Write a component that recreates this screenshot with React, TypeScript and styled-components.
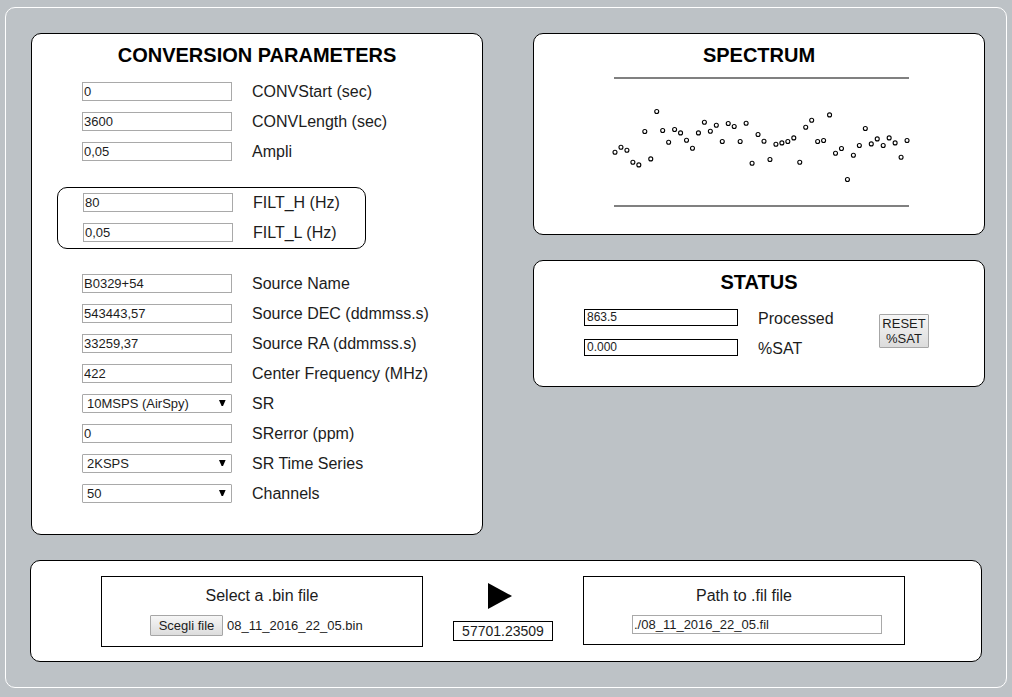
import React, { useRef, useState } from "react";
import styled, { createGlobalStyle } from "styled-components";

const GlobalStyle = createGlobalStyle`
  *, *::before, *::after { box-sizing: border-box; }
  body {
    margin: 0;
    background: #bdc2c6;
    color: #1c1c1c;
    font: 16px/20px "Liberation Sans", Arial, sans-serif;
  }
  input, select, button { font-family: inherit; color: inherit; }
`;

const Frame = styled.main`
  margin: 7px 5px 9px;
  padding: 25px 0;
  border: 1px solid #fff;
  border-radius: 10px;
`;

const Columns = styled.div`
  display: grid;
  grid-template-columns: 1fr 1fr;
  gap: 50px;
  padding: 0 21px 0 25px;
`;

const Stack = styled.div`
  display: flex;
  flex-direction: column;
  gap: 25px;
`;

const Panel = styled.section<{ $bottom: number }>`
  padding: 9px 0 ${(p) => p.$bottom}px;
  background: #fff;
  border: 1px solid #000;
  border-radius: 10px;
`;

const Title = styled.h2`
  margin: 0 0 10px;
  font-size: 20px;
  line-height: 24px;
  text-align: center;
  color: #000;
`;

const Group = styled.div`
  padding-left: 50px;
`;

const FilterGroup = styled.div`
  width: 309px;
  max-width: 100%;
  margin: 20px 0 20px 25px;
  padding-left: 25px;
  border: 1px solid #000;
  border-radius: 10px;
`;

const Row = styled.div`
  display: flex;
  align-items: flex-start;
  gap: 20px;
  height: 30px;
  padding-top: 5px;
`;

const TextInput = styled.input<{ $width: number }>`
  display: block;
  width: ${(p) => p.$width}px;
  height: 19px;
  padding: 0 1px;
  border: 1px solid #a9a9a9;
  border-radius: 0;
  background: #fff;
  font-size: 13px;
`;

const SelectBox = styled.span`
  position: relative;
  display: block;
  width: 150px;
  height: 19px;
`;

const Select = styled.select`
  display: block;
  width: 100%;
  height: 100%;
  padding: 0 20px 0 4px;
  appearance: none;
  border: 1px solid #a9a9a9;
  border-radius: 1px;
  background: #fff;
  font-size: 13px;
`;

const Arrow = styled.svg`
  position: absolute;
  top: 6px;
  right: 6px;
  pointer-events: none;
`;

const Plot = styled.svg`
  display: block;
  margin: 0 auto;
  overflow: visible;
`;

const StatusBody = styled.div`
  display: flex;
  justify-content: space-between;
  align-items: flex-start;
  padding: 0 55px 0 50px;
`;

const ResetArea = styled.div`
  padding-top: 10px;
`;

const Reading = styled.output`
  width: 154px;
  height: 17px;
  padding: 0 2px;
  border: 1px solid #000;
  font-size: 12px;
  line-height: 15px;
`;

const PushButton = styled.button<{ $width: number; $pad: number }>`
  display: block;
  width: ${(p) => p.$width}px;
  padding: ${(p) => p.$pad}px 0;
  border: 1px solid #a6a6a6;
  border-radius: 1px;
  background: linear-gradient(#f6f6f6, #dcdcdc);
  font-size: 13px;
  line-height: 15px;
  white-space: nowrap;
`;

const FilePanel = styled.section`
  display: grid;
  grid-template-columns: 1fr 100px 1fr;
  align-items: start;
  gap: 30px;
  margin: 25px 24px 0;
  padding: 15px 76px 14px 70px;
  background: #fff;
  border: 1px solid #000;
  border-radius: 10px;
`;

const FileBox = styled.div`
  display: flex;
  flex-direction: column;
  align-items: center;
  gap: 9px;
  padding: 9px 0 10px;
  border: 1px solid #000;
`;

const FilePicker = styled.div`
  display: flex;
  align-items: center;
  gap: 4px;
  width: 224px;
  font-size: 13px;
  line-height: 21px;

  input { display: none; }
`;

const PathField = styled.div`
  padding-left: 26px;
`;

const Runner = styled.div`
  display: flex;
  flex-direction: column;
  gap: 12px;
  padding-top: 7px;
`;

const PlayButton = styled.button`
  display: block;
  padding: 0 0 0 35px;
  border: 0;
  background: none;
  line-height: 0;
  text-align: left;
`;

const Clock = styled.output`
  width: 100%;
  border: 1px solid #000;
  font-size: 14px;
  line-height: 18px;
  text-align: center;
`;

const levels = [
  75, 70, 73, 85, 87.7, 54.3, 81.7, 34.3, 53.3, 65, 52.3, 55.7, 63, 71, 55.7, 45, 54, 48,
  64.3, 46.3, 49.3, 64.3, 46, 86, 57.3, 64, 82.3, 67, 65.7, 64.3, 60.7, 85, 50, 43, 64.3,
  63.3, 37.7, 76, 71.3, 102.3, 78, 68.3, 51.3, 66.7, 61.7, 68.3, 60.7, 65.7, 80, 63.3,
];

function Field({ id, label, value }: { id: string; label: string; value: string }) {
  return (
    <Row>
      <TextInput id={id} $width={150} defaultValue={value} />
      <label htmlFor={id}>{label}</label>
    </Row>
  );
}

function Choice({ id, label, options }: { id: string; label: string; options: string[] }) {
  return (
    <Row>
      <SelectBox>
        <Select id={id}>
          {options.map((o) => (
            <option key={o}>{o}</option>
          ))}
        </Select>
        <Arrow width="7" height="6" viewBox="0 0 7 6" aria-hidden="true">
          <path d="M0 0H6.6L4 6H2.6Z" fill="#000" />
        </Arrow>
      </SelectBox>
      <label htmlFor={id}>{label}</label>
    </Row>
  );
}

function Spectrum() {
  return (
    <Plot width="300" height="130" viewBox="0 0 300 130" role="img" aria-label="Spectrum">
      <path d="M5 1H300M5 129H300" stroke="#808080" strokeWidth="2" />
      <g fill="none" stroke="#000" strokeWidth="1.1">
        {levels.map((y, i) => (
          <circle key={i} cx={6 + i * 5.96} cy={y + 0.2} r="2" />
        ))}
      </g>
    </Plot>
  );
}

export default function App() {
  const picker = useRef<HTMLInputElement>(null);
  const [fileName, setFileName] = useState("08_11_2016_22_05.bin");
  const [saturation, setSaturation] = useState("0.000");

  return (
    <>
      <GlobalStyle />
      <Frame>
        <Columns>
          <Panel $bottom={25}>
            <Title>CONVERSION PARAMETERS</Title>
            <Group>
              <Field id="start" label="CONVStart (sec)" value="0" />
              <Field id="length" label="CONVLength (sec)" value="3600" />
              <Field id="ampli" label="Ampli" value="0,05" />
            </Group>
            <FilterGroup>
              <Field id="filt-h" label="FILT_H (Hz)" value="80" />
              <Field id="filt-l" label="FILT_L (Hz)" value="0,05" />
            </FilterGroup>
            <Group>
              <Field id="name" label="Source Name" value="B0329+54" />
              <Field id="dec" label="Source DEC (ddmmss.s)" value="543443,57" />
              <Field id="ra" label="Source RA (ddmmss.s)" value="33259,37" />
              <Field id="freq" label="Center Frequency (MHz)" value="422" />
              <Choice id="sr" label="SR" options={["10MSPS (AirSpy)"]} />
              <Field id="sr-error" label="SRerror (ppm)" value="0" />
              <Choice id="series" label="SR Time Series" options={["2KSPS"]} />
              <Choice id="channels" label="Channels" options={["50"]} />
            </Group>
          </Panel>
          <Stack>
            <Panel $bottom={27}>
              <Title>SPECTRUM</Title>
              <Spectrum />
            </Panel>
            <Panel $bottom={22}>
              <Title>STATUS</Title>
              <StatusBody>
                <div>
                  <Row>
                    <Reading id="processed">863.5</Reading>
                    <label htmlFor="processed">Processed</label>
                  </Row>
                  <Row>
                    <Reading id="sat">{saturation}</Reading>
                    <label htmlFor="sat">%SAT</label>
                  </Row>
                </div>
                <ResetArea>
                  <PushButton
                    type="button"
                    $width={50}
                    $pad={1}
                    onClick={() => setSaturation("0.000")}
                  >
                    RESET
                    <br />
                    %SAT
                  </PushButton>
                </ResetArea>
              </StatusBody>
            </Panel>
          </Stack>
        </Columns>
        <FilePanel>
          <FileBox>
            <label htmlFor="bin">Select a .bin file</label>
            <FilePicker>
              <PushButton
                type="button"
                $width={73}
                $pad={2}
                onClick={() => picker.current?.click()}
              >
                Scegli file
              </PushButton>
              <span>{fileName}</span>
              <input
                id="bin"
                ref={picker}
                type="file"
                accept=".bin"
                onChange={(e) => setFileName(e.target.files?.[0]?.name ?? fileName)}
              />
            </FilePicker>
          </FileBox>
          <Runner>
            <PlayButton type="button" aria-label="Start conversion">
              <svg width="24" height="26" viewBox="0 0 24 26">
                <path d="M0 0L24 13L0 26Z" fill="#000" />
              </svg>
            </PlayButton>
            <Clock>57701.23509</Clock>
          </Runner>
          <FileBox>
            <label htmlFor="fil">Path to .fil file</label>
            <PathField>
              <TextInput id="fil" $width={250} defaultValue="./08_11_2016_22_05.fil" />
            </PathField>
          </FileBox>
        </FilePanel>
      </Frame>
    </>
  );
}
